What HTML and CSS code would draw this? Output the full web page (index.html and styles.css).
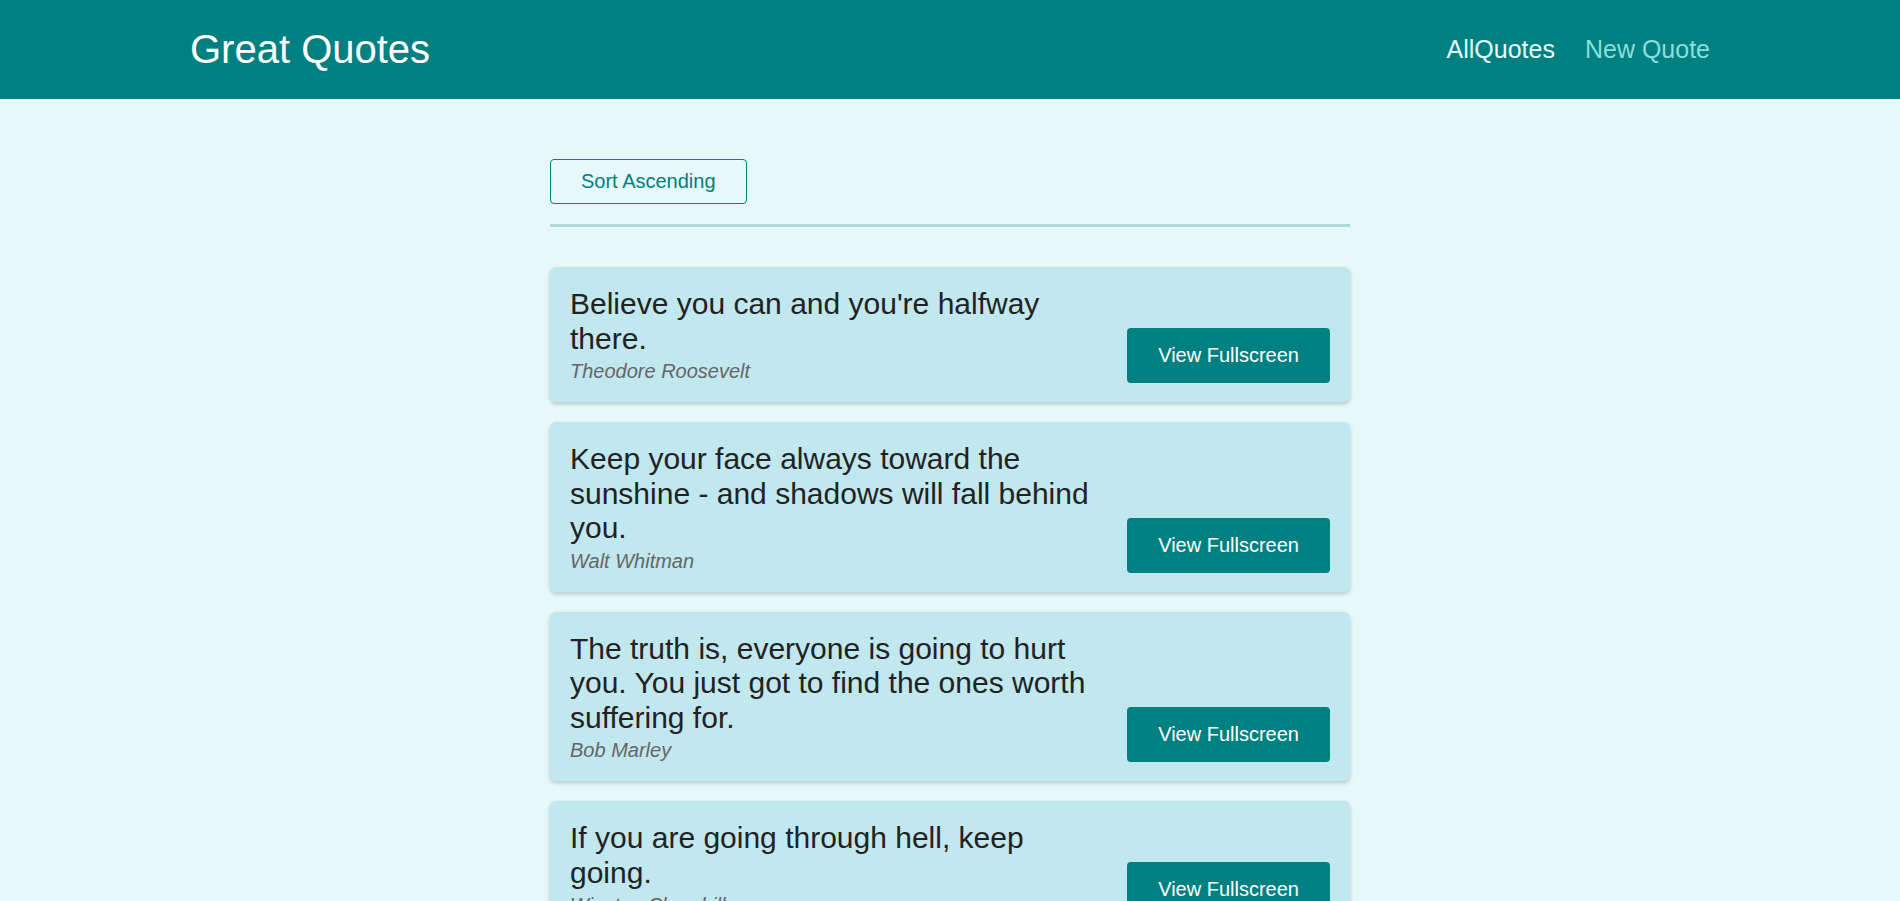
FILE: index.html
```html
<!DOCTYPE html>
<html lang="en">
<head>
<meta charset="utf-8">
<title>Great Quotes</title>
<link rel="stylesheet" href="styles.css">
</head>
<body>
<header class="header">
  <div class="logo">Great Quotes</div>
  <nav class="nav">
    <a class="nav-link" href="#">AllQuotes</a>
    <a class="nav-link active" href="#">New Quote</a>
  </nav>
</header>
<main class="main">
  <div class="sorting">
    <button class="sort-btn">Sort Ascending</button>
  </div>
  <ul class="quote-list">
    <li class="quote-item">
      <figure class="quote-fig">
        <blockquote class="quote-text">Believe you can and you're halfway there.</blockquote>
        <figcaption class="quote-author">Theodore Roosevelt</figcaption>
      </figure>
      <a class="view-btn" href="#">View Fullscreen</a>
    </li>
    <li class="quote-item">
      <figure class="quote-fig">
        <blockquote class="quote-text">Keep your face always toward the sunshine - and shadows will fall behind you.</blockquote>
        <figcaption class="quote-author">Walt Whitman</figcaption>
      </figure>
      <a class="view-btn" href="#">View Fullscreen</a>
    </li>
    <li class="quote-item">
      <figure class="quote-fig">
        <blockquote class="quote-text">The truth is, everyone is going to hurt you. You just got to find the ones worth suffering for.</blockquote>
        <figcaption class="quote-author">Bob Marley</figcaption>
      </figure>
      <a class="view-btn" href="#">View Fullscreen</a>
    </li>
    <li class="quote-item">
      <figure class="quote-fig">
        <blockquote class="quote-text">If you are going through hell, keep going.</blockquote>
        <figcaption class="quote-author">Winston Churchill</figcaption>
      </figure>
      <a class="view-btn" href="#">View Fullscreen</a>
    </li>
    <li class="quote-item">
      <figure class="quote-fig">
        <blockquote class="quote-text">Life is what happens when you're busy making other plans.</blockquote>
        <figcaption class="quote-author">John Lennon</figcaption>
      </figure>
      <a class="view-btn" href="#">View Fullscreen</a>
    </li>
  </ul>
</main>
</body>
</html>
```
FILE: styles.css
```css
* {
  box-sizing: border-box;
}

html, body {
  margin: 0;
  padding: 0;
}

body {
  font-family: "Liberation Sans", Arial, sans-serif;
  background: #e6f8f8;
  color: #222;
}

.header {
  height: 99px;
  background: #008080;
  display: flex;
  align-items: center;
  justify-content: space-between;
  padding: 0 10%;
}

.logo {
  font-size: 40px;
  color: #ffffff;
}

.nav {
  display: flex;
  align-items: center;
  gap: 30px;
}

.nav-link {
  font-size: 25px;
  color: #e6fcfc;
  text-decoration: none;
}

.nav-link.active {
  color: #88dfde;
}

.main {
  width: 800px;
  margin: 0 auto;
  padding-top: 60px;
}

.sorting {
  padding-bottom: 20px;
  border-bottom: 3px solid #b0d7d7;
}

.sort-btn {
  font-family: "Liberation Sans", Arial, sans-serif;
  font-size: 20px;
  color: #008080;
  background: transparent;
  border: 1px solid #008080;
  border-radius: 4px;
  padding: 10px 30px;
  line-height: 23px;
}

.quote-list {
  list-style: none;
  margin: 40px 0 0;
  padding: 0;
  display: flex;
  flex-direction: column;
  gap: 20px;
}

.quote-item {
  background: #c1e7ef;
  border-radius: 6px;
  box-shadow: 0 2px 4px rgba(0, 0, 0, 0.2);
  padding: 20px 20px 19px 20px;
  display: flex;
  justify-content: space-between;
  align-items: flex-end;
}

.quote-fig {
  margin: 0;
  width: 535px;
}

.quote-text {
  margin: 0;
  font-size: 30px;
  line-height: 34.5px;
  color: #222;
}

.quote-author {
  margin-top: 3px;
  font-size: 20px;
  line-height: 24px;
  font-style: italic;
  color: #666;
}

.view-btn {
  display: block;
  font-size: 20px;
  line-height: 23px;
  padding: 16px 31px;
  background: #008080;
  color: #ffffff;
  border-radius: 4px;
  text-decoration: none;
}
```
